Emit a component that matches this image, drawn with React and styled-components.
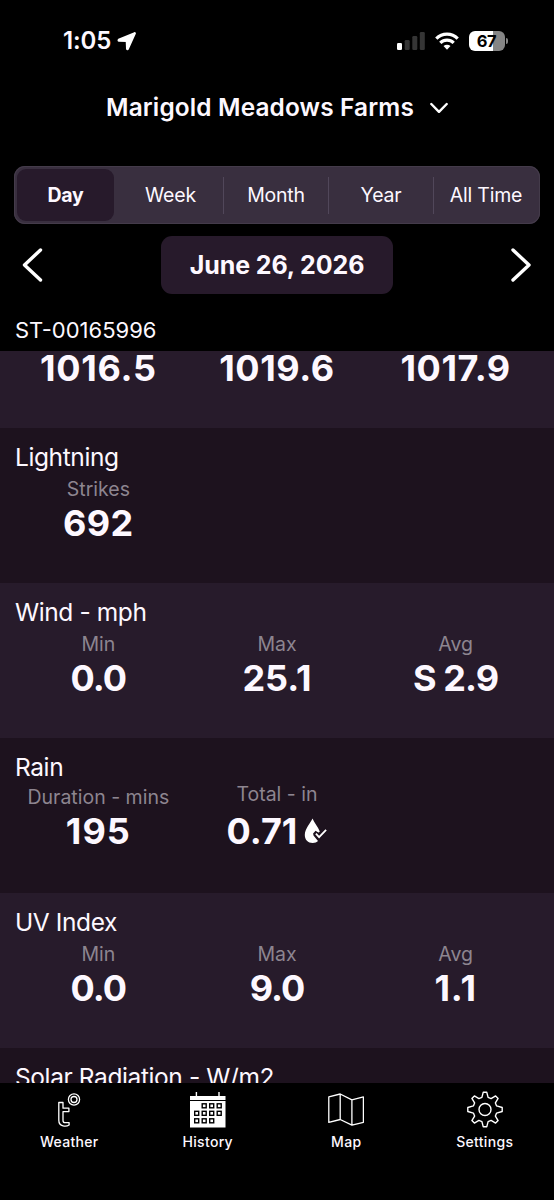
import { useState } from "react";
import styled, { createGlobalStyle } from "styled-components";

const GlobalStyle = createGlobalStyle`
  * {
    box-sizing: border-box;
  }

  body {
    margin: 0;
    background: #000;
    color: #fdf8ff;
    font-family: Inter, "Liberation Sans", sans-serif;
  }

  button {
    margin: 0;
    padding: 0;
    border: 0;
    background: none;
    color: inherit;
    font: inherit;
    cursor: pointer;
  }

  svg {
    display: block;
    flex: none;
  }
`

const Screen = styled.div`
  width: 554px;
  height: 1200px;
  display: flex;
  flex-direction: column;
  overflow: hidden;
  background: #000;
`

const StatusBar = styled.div`
  height: 82px;
  padding: 0 46px 0 63px;
  display: flex;
  align-items: center;
  justify-content: space-between;
`

const StatusGroup = styled.div`
  display: flex;
  align-items: center;
  gap: ${({ $gap }) => $gap}px;
`

const Clock = styled.span`
  font-size: 24px;
  font-weight: 600;
  line-height: 28px;
  letter-spacing: -0.1px;
`

const Battery = styled.div`
  display: flex;
  align-items: center;
  gap: 1px;
`

const BatteryBody = styled.div`
  width: 36px;
  height: 20px;
  padding-right: 1px;
  border-radius: 6px;
  background: linear-gradient(to right, #fff 67%, #858585 67%);
  color: #000;
  font-size: 16.5px;
  font-weight: 700;
  line-height: 20px;
  letter-spacing: -0.4px;
  text-align: center;
`

const BatteryCap = styled.div`
  width: 2px;
  height: 6px;
  border-radius: 0 2px 2px 0;
  background: #858585;
`

const StationPicker = styled.button`
  height: 50px;
  display: flex;
  align-items: center;
  justify-content: center;
  gap: 16px;
`

const StationName = styled.span`
  font-size: 24.4px;
  font-weight: 600;
  line-height: 30px;
  letter-spacing: 0.15px;
`

const Segments = styled.div`
  height: 58px;
  margin: 34px 14px 0 14px;
  padding-right: 1px;
  display: grid;
  grid-template-columns: repeat(5, 1fr);
  align-items: center;
  border-radius: 11px;
  background: #392f3f;
  box-shadow: inset 0 0 0 1px #443b4a;
`

const Segment = styled.button`
  height: ${({ $active }) => $active ? 52 : 37}px;
  margin: ${({ $active }) => $active ? "0 5px 0 3px" : "0 0 0 -1px"};
  padding-right: ${({ $active }) => $active ? 0 : 1}px;
  border-left: ${({ $divided }) => $divided ? "1px solid #51475a" : "0"};
  border-radius: ${({ $active }) => $active ? 9 : 0}px;
  background: ${({ $active }) => $active ? "#271a2b" : "transparent"};
  font-size: 19.5px;
  font-weight: ${({ $active }) => $active ? 700 : 400};
  letter-spacing: -0.2px;
  white-space: nowrap;
`

const DateRow = styled.div`
  height: 58px;
  margin-top: 12px;
  padding: 0 22px;
  display: flex;
  align-items: center;
  justify-content: space-between;
`

const DateButton = styled.button`
  width: 232px;
  height: 58px;
  border-radius: 11px;
  background: #271a2b;
  font-size: 25px;
  font-weight: 700;
  letter-spacing: -0.1px;
`

const StationId = styled.div`
  height: 57px;
  padding: 22px 14px 0 15px;
  font-size: 22px;
  line-height: 28px;
`

const Readings = styled.div`
  height: 732px;
  display: flex;
  flex-direction: column;
  justify-content: flex-start;
  overflow: hidden;
`

const Section = styled.section`
  flex: none;
  height: ${({ $scrolled }) => $scrolled ? 77 : 155}px;
  padding-top: ${({ $scrolled }) => $scrolled ? 0 : 14}px;
  background: ${({ $dark }) => $dark ? "#1d121e" : "#271b2b"};
`

const SectionTitle = styled.h2`
  margin: 0;
  padding-left: 15px;
  font-size: 24.5px;
  font-weight: 400;
  line-height: 30px;
  letter-spacing: -0.4px;
`

const Columns = styled.div`
  padding: 0 9px;
  display: grid;
  grid-template-columns: repeat(3, 1fr);
  align-items: end;
  margin-top: ${({ $offset }) => $offset}px;
`

const Reading = styled.div`
  display: flex;
  flex-direction: column;
  align-items: center;
  gap: ${({ $gap }) => $gap}px;
`

const ReadingLabel = styled.span`
  color: #8d8590;
  font-size: 19.5px;
  line-height: 26px;
`

const ReadingValue = styled.span`
  display: flex;
  align-items: center;
  gap: 7px;
  font-size: 36px;
  font-weight: 700;
  line-height: ${({ $compact }) => $compact ? 34 : 42}px;
  letter-spacing: ${({ $tracking }) => $tracking}px;
`

const TabBar = styled.nav`
  flex: 1;
  padding-top: 7px;
  display: grid;
  grid-template-columns: repeat(4, 1fr);
  align-items: start;
  background: #000;
`

const Tab = styled.button`
  display: flex;
  flex-direction: column;
  align-items: center;
  gap: 5px;
  font-size: 14px;
  font-weight: 500;
  line-height: 18px;
  letter-spacing: 0.3px;
`

function LocationIcon() {
  return (
    <svg width="20" height="20" viewBox="0 0 20 20" fill="#fff" stroke="#fff" strokeWidth="1.6" strokeLinejoin="round">
      <path d="M17.6 1.9 1.6 8.6c-.5.3-.4 1.3.3 1.300l7.600.2.3 7.600c0 .8 1 .9 1.300.3L18.100 2.400c.1-.4-.1-.6-.5-.5Z" />
    </svg>
  );
}

function SignalIcon() {
  return (
    <svg width="28" height="18" viewBox="0 0 28 18" fill="#353535">
      <rect x="0" y="11" width="5" height="7" rx="1.3" fill="#fff" />
      <rect x="7.7" y="8" width="5" height="10" rx="1.3" />
      <rect x="15.3" y="4" width="5" height="14" rx="1.3" />
      <rect x="22.8" y="0" width="5" height="18" rx="1.3" />
    </svg>
  );
}

function WifiIcon() {
  return (
    <svg width="24" height="18" viewBox="0 0 24 18" fill="none" stroke="#fff" strokeWidth="3.2">
      <path d="M1.3 6.6C7.2.6 16.8.6 22.7 6.6" />
      <path d="M5.3 10.9c3.8-3.8 9.6-3.8 13.4 0" />
      <path d="M12 17.7 8.5 14.1c2-1.8 5-1.8 7 0Z" fill="#fff" stroke="none" />
    </svg>
  );
}

function ChevronDown() {
  return (
    <svg width="18" height="12" viewBox="0 0 18 12" fill="none" stroke="#fff" strokeWidth="2.4" strokeLinecap="round" strokeLinejoin="round">
      <path d="m1.3 3 7.7 7.8L16.7 3" />
    </svg>
  );
}

function Arrow({ isNext }) {
  return (
    <svg width="22" height="36" viewBox="0 0 22 36" fill="none" stroke="#fff" strokeWidth="3.4" strokeLinecap="round" strokeLinejoin="round">
      <path d={isNext ? "M3 3 19 18 3 33" : "M18.500 3 2.500 18l16 15"} />
    </svg>
  );
}

function DropCheckIcon() {
  return (
    <svg width="23" height="26" viewBox="0 0 23 26" fill="none">
      <path d="M8.500.5C7 4.500.8 10.500.8 17c0 4.800 3.200 8 7.900 8 2.300 0 4.200-.7 5.300-2L9.500 17.500l-.4-2 2.500-2.700 3 2 1.200-1.300C14 8.500 10 4.500 8.500.5Z" fill="#fff" />
      <path d="m11.900 15.600 3.200 3.500 7-7.200" stroke="#1d121e" strokeWidth="5" />
      <path d="m11.900 15.600 3.200 3.500 7-7.200" stroke="#fff" strokeWidth="1.800" />
    </svg>
  );
}

function WeatherIcon() {
  return (
    <svg width="36" height="38" viewBox="0 0 36 38" fill="none" stroke="#fff" strokeWidth="1.3">
      <circle cx="23" cy="9.5" r="5.6" />
      <circle cx="23" cy="9.5" r="3" />
      <path d="M7.8 12.5h4.2v5.7h5.9v3.4h-5.9v8.8c0 1.4.7 2.2 2.2 2.2h3.9v2.4c-1.5 1-4 1.3-6 .9-2.8-.6-4.3-2.5-4.3-5.6Z" strokeLinejoin="round" />
    </svg>
  );
}

const calendarDays = [
  [1, 0], [2, 0], [3, 0],
  [0, 1], [1, 1], [2, 1], [3, 1],
  [0, 2], [1, 2], [2, 2],
];

function HistoryIcon() {
  return (
    <svg width="36" height="38" viewBox="0 0 36 38">
      <path d="M0 6h35.5v4H0ZM0 11h35.5v26.5H0ZM5.7 2h1.4v5H5.7ZM28.3 2h1.4v5h-1.4Z" fill="#fff" />
      {calendarDays.map(([col, row]) => (
        <rect
          key={`${col}-${row}`}
          x={4.7 + col * 7.5}
          y={13.8 + row * 7.5}
          width="4"
          height="4"
          fill="#fff"
          stroke="#000"
          strokeWidth="1.4" />
      ))}
    </svg>
  );
}

function MapIcon() {
  return (
    <svg width="36" height="38" viewBox="0 0 36 38" fill="none" stroke="#fff" strokeWidth="1.3" strokeLinejoin="round">
      <path d="M.8 6.8 12.2 4l11.7 5.8 11.5-2.9v25.4L23.9 35.200 12.200 29.500.8 32.300ZM12.200 4v25.500M23.900 9.800v25.400" />
    </svg>
  );
}

function SettingsIcon() {
  return (
    <svg width="36" height="38" viewBox="0 0 36 38" fill="none" stroke="#fff" strokeWidth="1.4" strokeLinejoin="round">
      <circle cx="18" cy="19.5" r="6" />
      <path d="M16.2 2.3h3.6l1.3 5.1 3 1.2 4.5-2.7 2.5 2.5-2.7 4.5 1.2 3 5.6 1.6v4l-5.6 1.6-1.2 3 2.7 4.5-2.5 2.5-4.5-2.7-3 1.2-1.3 5.1h-3.6l-1.3-5.1-3-1.2-4.5 2.7-2.5-2.5 2.7-4.5-1.2-3L.8 21.5v-4l5.6-1.6 1.2-3-2.7-4.5 2.5-2.5 4.5 2.7 3-1.2Z" />
    </svg>
  );
}

const periods = ["Day", "Week", "Month", "Year", "All Time"];

// the list is scrolled, so the first section only shows its values
const sections = [
  {
    id: "pressure",
    scrolled: true,
    offset: 0,
    readings: [
      { value: "1016.5", tracking: 0.7 },
      { value: "1019.6", tracking: 0.6 },
      { value: "1017.9", tracking: 0.6 },
    ],
  },
  {
    id: "lightning",
    title: "Lightning",
    readings: [{ label: "Strikes", value: "692", tracking: 0.4 }],
  },
  {
    id: "wind",
    title: "Wind - mph",
    readings: [
      { label: "Min", value: "0.0", tracking: -1 },
      { label: "Max", value: "25.1" },
      { label: "Avg", value: "S 2.9", tracking: -0.9 },
    ],
  },
  {
    id: "rain",
    title: "Rain",
    offset: -1,
    readings: [
      { label: "Duration - mins", value: "195", tracking: 1 },
      { label: "Total - in", value: "0.71", checked: true },
    ],
  },
  {
    id: "uv",
    title: "UV Index",
    readings: [
      { label: "Min", value: "0.0", tracking: -1 },
      { label: "Max", value: "9.0", tracking: -1 },
      { label: "Avg", value: "1.1", tracking: 0.8 },
    ],
  },
  {
    id: "solar",
    title: "Solar Radiation - W/m2",
    readings: [],
  },
];

const tabs = [
  { name: "Weather", Icon: WeatherIcon },
  { name: "History", Icon: HistoryIcon },
  { name: "Map", Icon: MapIcon },
  { name: "Settings", Icon: SettingsIcon },
];

function App() {
  const [period, setPeriod] = useState("Day");

  return (
    <>
      <GlobalStyle />
      <Screen>
        <StatusBar>
          <StatusGroup $gap={6}>
            <Clock>1:05</Clock>
            <LocationIcon />
          </StatusGroup>
          <StatusGroup $gap={10}>
            <SignalIcon />
            <WifiIcon />
            <Battery>
              <BatteryBody>67</BatteryBody>
              <BatteryCap />
            </Battery>
          </StatusGroup>
        </StatusBar>
        <StationPicker>
          <StationName>Marigold Meadows Farms</StationName>
          <ChevronDown />
        </StationPicker>
        <Segments>
          {periods.map((name, idx) => (
            <Segment
              key={name}
              $active={name === period}
              $divided={idx > 1}
              onClick={() => setPeriod(name)}>
              {name}
            </Segment>
          ))}
        </Segments>
        <DateRow>
          <button aria-label="Previous day"><Arrow /></button>
          <DateButton>June 26, 2026</DateButton>
          <button aria-label="Next day"><Arrow isNext /></button>
        </DateRow>
        <StationId>ST-00165996</StationId>
        <Readings>
          {sections.map(({ id, title, scrolled, offset = 4, readings }, idx) => (
            <Section key={id} $dark={idx % 2 === 1} $scrolled={scrolled}>
              {title && <SectionTitle>{title}</SectionTitle>}
              <Columns $offset={offset}>
                {readings.map(({ label, value, checked, tracking = 0 }) => (
                  <Reading key={value + label} $gap={checked ? 3 : 0}>
                    {label && <ReadingLabel>{label}</ReadingLabel>}
                    <ReadingValue $compact={scrolled} $tracking={tracking}>
                      {value}
                      {checked && <DropCheckIcon />}
                    </ReadingValue>
                  </Reading>
                ))}
              </Columns>
            </Section>
          ))}
        </Readings>
        <TabBar>
          {tabs.map(({ name, Icon }) => (
            <Tab key={name}>
              <Icon />
              {name}
            </Tab>
          ))}
        </TabBar>
      </Screen>
    </>
  );
}

export default App;
